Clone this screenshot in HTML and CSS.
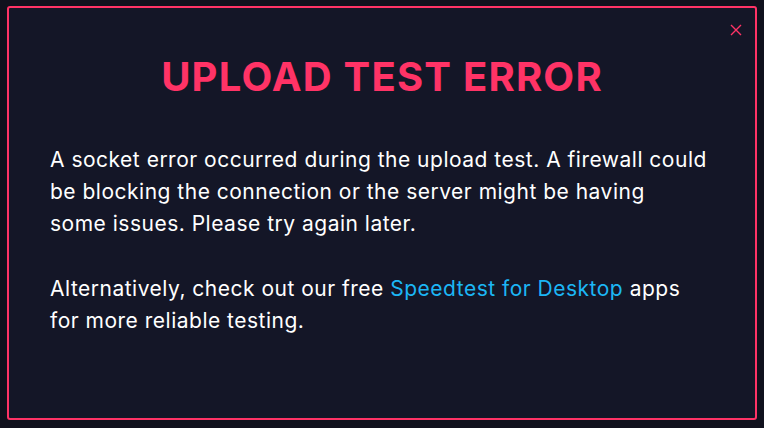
FILE: index.html
```html
<!DOCTYPE html>
<html>
<head>
    <title>Upload Test Error</title>
    <link rel="stylesheet" href="styles.css">
</head>
<body>
    <div class="modal">
        <button class="close" aria-label="Close">
            <svg width="12" height="12" viewBox="0 0 12 12"><path d="M1 1L11 11M11 1L1 11" stroke="#ff3366" stroke-width="1.4" fill="none"/></svg>
        </button>
        <h1 class="title">UPLOAD TEST ERROR</h1>
        <div class="message">
            <p>A socket error occurred during the upload test. A firewall could be blocking the connection or the server might be having some&nbsp;issues. Please try again later.</p>
            <p>Alternatively, check out our free <a href="#">Speedtest for Desktop</a> apps for more reliable testing.</p>
        </div>
    </div>
</body>
</html>
```

FILE: styles.css
```css
html, body { height: 100%; }
body { margin: 0; padding: 6px 7px 8px 7px; box-sizing: border-box; background: #10111d; font-family: Inter, "Open Sans", sans-serif; color: #fff; }
.modal { position: relative; height: 100%; box-sizing: border-box; border: 2px solid #ff3366; border-radius: 3px; background: #141627; padding: 0 41px; }
.close { position: absolute; top: 14px; right: 11px; width: 16px; height: 16px; padding: 0; border: none; background: none; cursor: pointer; display: flex; align-items: center; justify-content: center; }
.title { margin: 45px 0 0; text-align: center; color: #ff3366; font-size: 40px; font-weight: 700; line-height: 48px; letter-spacing: 1.2px; }
.message { margin-top: 43px; font-size: 21px; line-height: 32px; letter-spacing: 0.5px; }
.message p { margin: 0 0 33px; }
.message a { color: #1cb6f5; text-decoration: none; }
```
